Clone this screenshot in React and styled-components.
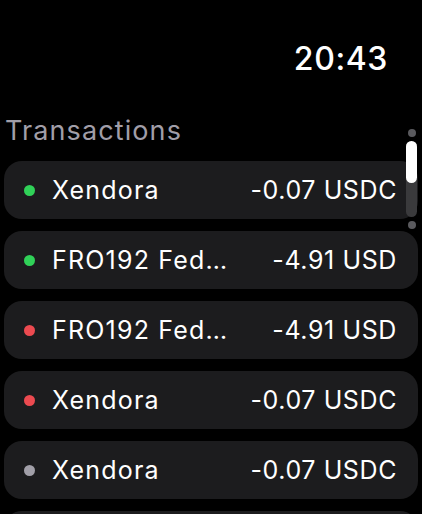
import React from 'react';
import styled, { createGlobalStyle } from 'styled-components';

const GlobalStyle = createGlobalStyle`
  html, body {
    margin: 0;
    padding: 0;
    background: #000;
  }
  body {
    font-family: Inter, "Noto Sans", sans-serif;
    color: #fff;
    -webkit-font-smoothing: antialiased;
  }
`;

const Screen = styled.div`
  width: 422px;
  height: 514px;
  overflow: hidden;
  position: relative;
  background: #000;
`;

const StatusBar = styled.div`
  display: flex;
  justify-content: flex-end;
  padding: 39px 34px 0 0;
  height: 40px;
  font-size: 32px;
  font-weight: 500;
  letter-spacing: 0.6px;
`;

const Title = styled.h2`
  margin: 35px 0 0 5px;
  font-size: 27px;
  font-weight: 400;
  color: #a19ea8;
  letter-spacing: 1.1px;
`;

const List = styled.div`
  display: flex;
  flex-direction: column;
  gap: 12px;
  margin: 14px 4px 0 4px;
`;

const Row = styled.div`
  display: flex;
  align-items: center;
  height: 58px;
  padding: 0 21px 0 20px;
  border-radius: 18px;
  background: #1c1c1e;
  font-size: 25px;
  letter-spacing: 0.6px;
`;

const Dot = styled.span`
  width: 11px;
  height: 11px;
  border-radius: 50%;
  background: ${({ status }) =>
    status === 'ok' ? '#30d158' : status === 'fail' ? '#ec4a50' : '#a19fa8'};
  flex-shrink: 0;
  margin-right: 17px;
`;

const Name = styled.span`
  flex: 1;
  min-width: 0;
  white-space: nowrap;
  overflow: hidden;
  letter-spacing: 1.2px;
`;

const Amount = styled.span`
  white-space: nowrap;
`;

const Scroller = styled.div`
  position: absolute;
  top: 129px;
  right: 5px;
  width: 11px;
  display: flex;
  flex-direction: column;
  align-items: center;
  gap: 4px;
`;

const ScrollDot = styled.span`
  width: 8px;
  height: 8px;
  border-radius: 50%;
  background: #5a5a5e;
`;

const Track = styled.div`
  width: 11px;
  height: 76px;
  border-radius: 6px;
  background: #3a3a3c;
  display: flex;
  flex-direction: column;
`;

const Thumb = styled.div`
  height: 42px;
  border-radius: 6px;
  background: #fff;
`;

const transactions = [
  { name: 'Xendora', amount: '-0.07 USDC', status: 'ok' },
  { name: 'FRO192 Fed…', amount: '-4.91 USD', status: 'ok' },
  { name: 'FRO192 Fed…', amount: '-4.91 USD', status: 'fail' },
  { name: 'Xendora', amount: '-0.07 USDC', status: 'fail' },
  { name: 'Xendora', amount: '-0.07 USDC', status: 'pending' },
  { name: 'Xendora', amount: '-0.07 USDC', status: 'ok' },
];

export default function App() {
  return (
    <Screen>
      <GlobalStyle />
      <StatusBar>20:43</StatusBar>
      <Title>Transactions</Title>
      <List>
        {transactions.map((t, i) => (
          <Row key={i}>
            <Dot status={t.status} />
            <Name>{t.name}</Name>
            <Amount>{t.amount}</Amount>
          </Row>
        ))}
      </List>
      <Scroller>
        <ScrollDot />
        <Track>
          <Thumb />
        </Track>
        <ScrollDot />
      </Scroller>
    </Screen>
  );
}
